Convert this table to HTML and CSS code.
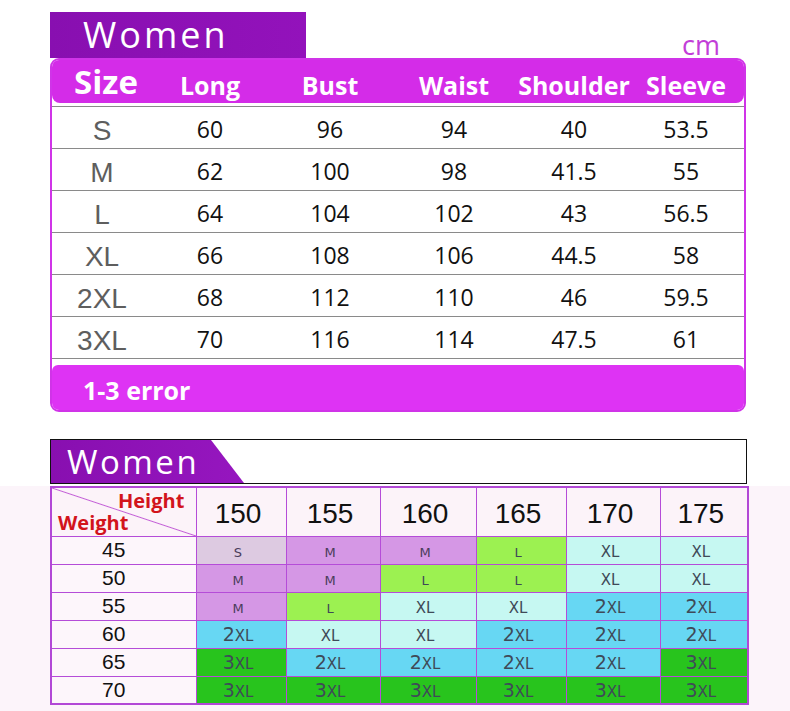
FILE: index.html
```html
<!DOCTYPE html>
<html>
<head>
<meta charset="utf-8">
<link rel="stylesheet" href="styles.css">
</head>
<body>
<div class="top">
  <div class="top-head">
    <div class="tab">Women</div>
    <div class="cm">cm</div>
  </div>
  <div class="size-box">
    <div class="band grid">
      <div class="h-size">Size</div>
      <div>Long</div>
      <div>Bust</div>
      <div>Waist</div>
      <div>Shoulder</div>
      <div>Sleeve</div>
    </div>
    <div class="rows">
      <div class="row grid"><div class="sz">S</div><div>60</div><div>96</div><div>94</div><div>40</div><div>53.5</div></div>
      <div class="row grid"><div class="sz">M</div><div>62</div><div>100</div><div>98</div><div>41.5</div><div>55</div></div>
      <div class="row grid"><div class="sz">L</div><div>64</div><div>104</div><div>102</div><div>43</div><div>56.5</div></div>
      <div class="row grid"><div class="sz">XL</div><div>66</div><div>108</div><div>106</div><div>44.5</div><div>58</div></div>
      <div class="row grid"><div class="sz">2XL</div><div>68</div><div>112</div><div>110</div><div>46</div><div>59.5</div></div>
      <div class="row grid"><div class="sz">3XL</div><div>70</div><div>116</div><div>114</div><div>47.5</div><div>61</div></div>
    </div>
    <div class="foot">1-3 error</div>
  </div>
</div>

<div class="bottom-head">
  <div class="tab2">Women</div>
</div>

<div class="bottom">
  <table class="chart">
    <colgroup>
      <col class="c0"><col class="c1"><col class="c2"><col class="c3"><col class="c4"><col class="c5"><col class="c6">
    </colgroup>
    <tr class="hrow">
      <th class="corner"><span class="hgt">Height</span><span class="wgt">Weight</span></th>
      <th>150</th><th>155</th><th>160</th><th>165</th><th>170</th><th>175</th>
    </tr>
    <tr>
      <td class="w">45</td>
      <td class="s"><small>S</small></td><td class="m"><small>M</small></td><td class="m"><small>M</small></td><td class="l"><small>L</small></td><td class="xl"><small>XL</small></td><td class="xl"><small>XL</small></td>
    </tr>
    <tr>
      <td class="w">50</td>
      <td class="m"><small>M</small></td><td class="m"><small>M</small></td><td class="l"><small>L</small></td><td class="l"><small>L</small></td><td class="xl"><small>XL</small></td><td class="xl"><small>XL</small></td>
    </tr>
    <tr>
      <td class="w">55</td>
      <td class="m"><small>M</small></td><td class="l"><small>L</small></td><td class="xl"><small>XL</small></td><td class="xl"><small>XL</small></td><td class="x2">2<small>XL</small></td><td class="x2">2<small>XL</small></td>
    </tr>
    <tr>
      <td class="w">60</td>
      <td class="x2">2<small>XL</small></td><td class="xl"><small>XL</small></td><td class="xl"><small>XL</small></td><td class="x2">2<small>XL</small></td><td class="x2">2<small>XL</small></td><td class="x2">2<small>XL</small></td>
    </tr>
    <tr>
      <td class="w">65</td>
      <td class="x3">3<small>XL</small></td><td class="x2">2<small>XL</small></td><td class="x2">2<small>XL</small></td><td class="x2">2<small>XL</small></td><td class="x2">2<small>XL</small></td><td class="x3">3<small>XL</small></td>
    </tr>
    <tr>
      <td class="w">70</td>
      <td class="x3">3<small>XL</small></td><td class="x3">3<small>XL</small></td><td class="x3">3<small>XL</small></td><td class="x3">3<small>XL</small></td><td class="x3">3<small>XL</small></td><td class="x3">3<small>XL</small></td>
    </tr>
  </table>
</div>
</body>
</html>
```

FILE: styles.css
```css
* { box-sizing: border-box; }
html, body { margin: 0; padding: 0; }
body {
  width: 790px;
  height: 711px;
  overflow: hidden;
  background: #ffffff;
  font-family: "Open Sans", "DejaVu Sans", sans-serif;
}

/* ---------- top table ---------- */
.top {
  padding: 12px 44px 0 50px;
}
.top-head {
  display: flex;
  justify-content: space-between;
  align-items: flex-start;
  height: 46px;
}
.tab {
  width: 256px;
  height: 46px;
  background: linear-gradient(90deg, #880fb0, #9312bb);
  color: #fff;
  font-size: 36px;
  line-height: 46px;
  letter-spacing: 3px;
  padding-left: 33px;
}
.cm {
  margin-top: 18px;
  margin-right: 26px;
  font-size: 27px;
  line-height: 30px;
  color: #c23ed8;
}
.size-box {
  height: 354px;
  border: 2px solid #d034e8;
  border-radius: 9px;
  overflow: hidden;
  background: #fff;
}
.grid {
  display: grid;
  grid-template-columns: 100px 116px 124px 124px 116px 108px;
  align-items: center;
  justify-items: center;
}
.band {
  height: 43px;
  background: #d42ce8;
  color: #fff;
  font-weight: 700;
  font-size: 25px;
  padding-top: 5px;
  border-radius: 0 0 8px 8px;
}
.band .h-size {
  font-size: 33px;
  margin-top: -6px;
  margin-left: 8px;
}
.rows {
  margin-top: 3px;
  border-top: 1px solid #8a8a8a;
}
.row {
  height: 42px;
  border-bottom: 1px solid #8a8a8a;
  font-size: 23px;
  color: #111;
  padding-top: 3px;
}
.row .sz {
  font-family: "Liberation Sans", Arial, sans-serif;
  font-size: 28px;
  color: #5e5e5e;
  padding-top: 4px;
}
.foot {
  margin-top: 6px;
  height: 46px;
  background: #de33f4;
  color: #fff;
  font-weight: 700;
  font-size: 25px;
  line-height: 50px;
  padding-left: 31px;
  border-radius: 6px 6px 0 0;
}

/* ---------- bottom chart ---------- */
.bottom-head {
  margin: 27px 43px 0 50px;
  height: 45px;
  border: 1px solid #111;
  background: #fff;
}
.tab2 {
  width: 193px;
  height: 43px;
  background: linear-gradient(90deg, #880fb0, #9616bf);
  clip-path: polygon(0 0, 160px 0, 100% 100%, 0 100%);
  color: #fff;
  font-size: 33px;
  line-height: 43px;
  letter-spacing: 2.5px;
  padding-left: 16px;
}
.bottom {
  margin-top: 2px;
  background: #fcf4fa;
  height: 240px;
  padding: 0 0 0 50px;
}
.chart {
  border-collapse: collapse;
  table-layout: fixed;
  width: 697px;
  border: 2px solid #b248d6;
}
.c0 { width: 145px; }
.c1 { width: 90px; }
.c2 { width: 94px; }
.c3 { width: 96px; }
.c4 { width: 90px; }
.c5 { width: 94px; }
.c6 { width: 88px; }
.chart th, .chart td {
  border: 1px solid #b54cd8;
  padding: 0;
  text-align: center;
}
.chart tr.hrow { height: 49px; }
.hrow th {
  background: #fcf3f9;
  font-family: "Liberation Sans", Arial, sans-serif;
  font-weight: 400;
  font-size: 28px;
  line-height: 30px;
  color: #111;
  padding: 4px 6px 0 0;
}
.hrow th.corner {
  padding: 0;
  background:
    linear-gradient(to top right, transparent calc(50% - 1px), #c564d8 50%, transparent calc(50% + 1px)),
    #fcf3f9;
  font-family: "Open Sans", "DejaVu Sans", sans-serif;
  font-weight: 700;
  font-size: 20px;
  color: #d2141c;
  line-height: 22px;
  text-align: left;
}
.corner span { display: block; }
.corner .hgt { padding-left: 66px; }
.corner .wgt { padding-left: 6px; }
.chart tr { height: 28px; }
.chart td {
  height: 28px;
  font-family: "DejaVu Sans", sans-serif;
  font-size: 19px;
  color: #3f4a58;
  padding-right: 6px;
  line-height: 20px;
}
.chart td small {
  font-size: 15px;
  line-height: 1;
}
.chart td.w {
  background: #fdf6fb;
  font-family: "Liberation Sans", Arial, sans-serif;
  font-size: 21px;
  color: #111;
  padding-right: 20px;
}
.chart td.s { background: #ddcae1; }
.chart td.m { background: #d597e5; }
.chart td.m small, .chart td.s small { font-size: 13px; color: #4a3c5a; }
.chart td.l { background: #9cf151; }
.chart td.l small { font-size: 13px; }
.chart td.xl { background: #c6f8f2; }
.chart td.x2 { background: #67d7f3; }
.chart td.x3 { background: #28c41d; }
```
